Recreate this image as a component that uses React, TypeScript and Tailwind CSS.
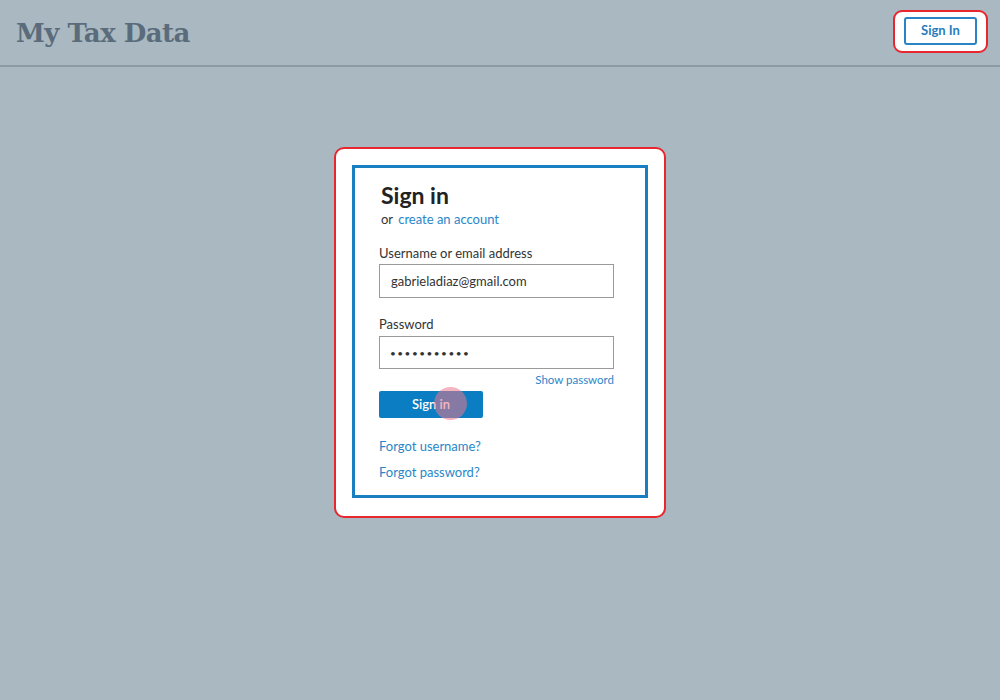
const App = () => {
  return (
    <div className="w-[1000px] h-[700px] bg-[#aab8c1] flex flex-col font-['Lato','Open_Sans',sans-serif]">
      <header className="h-[67px] border-b-2 border-[#8d9ba5] flex items-center justify-between pl-4 pr-3">
        <h1 className="font-['DejaVu_Serif',serif] font-bold text-[26px] text-[#5a6c7b] tracking-[-0.5px] mt-[2px]">
          My Tax Data
        </h1>
        <div className="w-[95px] h-[43px] bg-white border-2 border-[#e8262d] rounded-[9px] flex items-center justify-center mt-[-3px]">
          <button className="w-[73px] h-[28px] border-2 border-[#2a84c4] rounded-[3px] text-[#2a7dbd] text-[13px] font-bold">
            Sign In
          </button>
        </div>
      </header>

      <main className="flex justify-center pt-[80px]">
        <div className="w-[332px] bg-white border-2 border-[#e8262d] rounded-[10px] px-4 pt-4 pb-[18px]">
          <div className="border-[3px] border-[#1a7fc1] pl-[24px] pr-[30px] pt-[12px] pb-[14px]">
            <h2 className="text-[23px] font-bold text-[#222] leading-[30px] pl-[2px]">Sign in</h2>
            <p className="text-[13px] text-[#333] leading-[18px] pl-[2px]">
              or <span className="text-[#2a86c8] ml-[2px]">create an account</span>
            </p>
            <label className="block text-[13px] text-[#333] mt-[16px] leading-[18px]">
              Username or email address
            </label>
            <input
              readOnly
              value="gabrieladiaz@gmail.com"
              className="mt-[2px] w-[235px] h-[34px] border border-[#9a9a9a] px-[11px] text-[13px] text-[#333] outline-none"
            />
            <label className="block text-[13px] text-[#333] mt-[17px] leading-[18px]">Password</label>
            <input
              readOnly
              type="password"
              value="abcdefghijk"
              className="mt-[3px] w-[235px] h-[33px] border border-[#9a9a9a] px-[10px] text-[10px] text-[#333] tracking-[1.5px] outline-none"
            />
            <div className="w-[235px] text-right text-[11.5px] text-[#2a86c8] mt-[3px] leading-[16px]">
              Show password
            </div>
            <div className="relative w-[104px] mt-[3px]">
              <button className="w-[104px] h-[27px] bg-[#0b7dc2] rounded-[2px] text-white text-[13px] font-semibold">
                Sign in
              </button>
              <div className="absolute left-[55px] top-[-4px] w-[33px] h-[33px] rounded-full bg-[rgba(236,120,140,0.55)]" />
            </div>
            <div className="mt-[19px] text-[13px] text-[#2a86c8] leading-[18px]">Forgot username?</div>
            <div className="mt-[8px] text-[13px] text-[#2a86c8] leading-[18px]">Forgot password?</div>
          </div>
        </div>
      </main>
    </div>
  );
};

export default App;
